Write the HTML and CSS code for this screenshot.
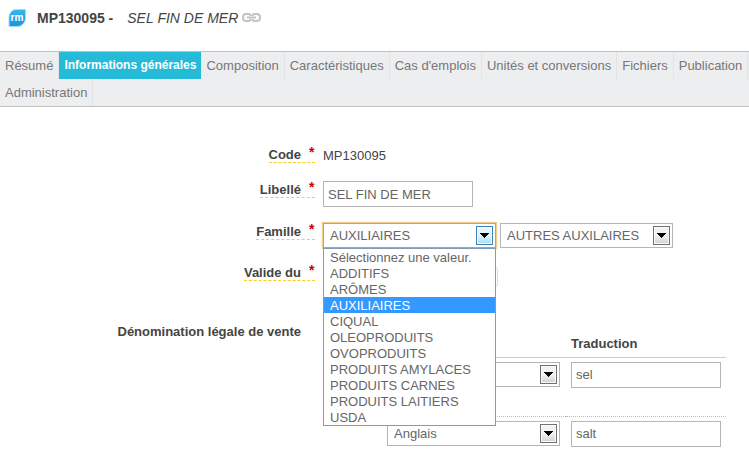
FILE: index.html
```html
<!DOCTYPE html>
<html lang="fr">
<head>
<meta charset="utf-8">
<title>MP130095 - SEL FIN DE MER</title>
<link rel="stylesheet" href="styles.css">
</head>
<body>
<header class="title-bar">
  <svg class="logo" viewBox="0 0 18 18" aria-hidden="true">
    <defs><linearGradient id="leaf" x1="0" y1="0" x2="0" y2="1"><stop offset="0" stop-color="#35b8ec"/><stop offset="1" stop-color="#1795d8"/></linearGradient></defs>
    <path d="M7 .5H17.500V10Q17 13 15 15Q12.500 17.500 10 17.500H1V8Q1 5 3 3Q5 .5 7 .5Z" fill="url(#leaf)" stroke="#a5dcf3"/>
    <text class="logo-text" x="9" y="12" text-anchor="middle">rm</text>
  </svg>
  <h1 class="title">MP130095 -</h1>
  <span class="subtitle">SEL FIN DE MER</span>
  <svg class="link-icon" viewBox="0 0 19 9" fill="none" stroke="#c3c3c3" stroke-width="2" aria-hidden="true">
    <path d="M8.500 3Q8.500 1 6.500 1H4Q1 1 1 4.500T4 8H6.500Q8.500 8 8.500 6M10.500 3Q10.500 1 12.500 1H15Q18 1 18 4.500T15 8H12.500Q10.500 8 10.500 6"/>
    <path d="M5 4.500H14"/>
  </svg>
</header>
<nav class="tabs">
  <a class="tab" href="#resume">Résumé</a>
  <a class="tab tab-active" href="#infos" aria-current="page">Informations générales</a>
  <a class="tab" href="#composition">Composition</a>
  <a class="tab" href="#caracteristiques">Caractéristiques</a>
  <a class="tab" href="#emplois">Cas d'emplois</a>
  <a class="tab" href="#unites">Unités et conversions</a>
  <a class="tab" href="#fichiers">Fichiers</a>
  <a class="tab" href="#publication">Publication</a>
  <a class="tab" href="#administration">Administration</a>
</nav>
<form class="form">
  <div class="row row-code">
    <div class="label-cell"><label class="label" for="code">Code<sup class="star">*</sup></label></div>
    <output class="value" id="code">MP130095</output>
  </div>
  <div class="row">
    <div class="label-cell"><label class="label" for="libelle">Libellé<sup class="star">*</sup></label></div>
    <div><input class="text-box" id="libelle" type="text" value="SEL FIN DE MER"></div>
  </div>
  <div class="row">
    <div class="label-cell"><label class="label" for="famille">Famille<sup class="star">*</sup></label></div>
    <div class="selects">
      <div class="select select-open">
        <select id="famille"><option>AUXILIAIRES</option></select>
        <svg class="arrow" viewBox="0 0 15 17" aria-hidden="true"><path d="M3 6H12V7H11V8H10V9H9V10H8V11H7V10H6V9H5V8H4V7H3Z"/></svg>
        <ul class="menu" role="listbox" aria-label="Famille">
          <li class="option" role="option">Sélectionnez une valeur.</li>
          <li class="option" role="option">ADDITIFS</li>
          <li class="option" role="option">ARÔMES</li>
          <li class="option option-selected" role="option" aria-selected="true">AUXILIAIRES</li>
          <li class="option" role="option">CIQUAL</li>
          <li class="option" role="option">OLEOPRODUITS</li>
          <li class="option" role="option">OVOPRODUITS</li>
          <li class="option" role="option">PRODUITS AMYLACES</li>
          <li class="option" role="option">PRODUITS CARNES</li>
          <li class="option" role="option">PRODUITS LAITIERS</li>
          <li class="option" role="option">USDA</li>
        </ul>
      </div>
      <div class="select">
        <select aria-label="Sous-famille"><option>AUTRES AUXILAIRES</option></select>
        <svg class="arrow" viewBox="0 0 15 17" aria-hidden="true"><path d="M3 6H12V7H11V8H10V9H9V10H8V11H7V10H6V9H5V8H4V7H3Z"/></svg>
      </div>
    </div>
  </div>
  <div class="row row-date">
    <div class="label-cell"><label class="label" for="valide">Valide du<sup class="star">*</sup></label></div>
    <div><input class="date-box" id="valide" type="text"></div>
  </div>
  <div class="row row-legal">
    <div class="label-cell"><span class="label-plain" id="denomination">Dénomination légale de vente</span></div>
    <table class="translations" aria-labelledby="denomination">
      <thead><tr><th class="lang-col" aria-label="Langue"></th><th>Traduction</th></tr></thead>
      <tbody>
        <tr class="first">
          <td><div class="select"><select aria-label="Langue 1"><option></option></select>
            <svg class="arrow" viewBox="0 0 15 17" aria-hidden="true"><path d="M3 6H12V7H11V8H10V9H9V10H8V11H7V10H6V9H5V8H4V7H3Z"/></svg></div></td>
          <td><input class="text-box" type="text" aria-label="Traduction 1" value="sel"></td>
        </tr>
        <tr>
          <td><div class="select"><select aria-label="Langue 2"><option>Anglais</option></select>
            <svg class="arrow" viewBox="0 0 15 17" aria-hidden="true"><path d="M3 6H12V7H11V8H10V9H9V10H8V11H7V10H6V9H5V8H4V7H3Z"/></svg></div></td>
          <td><input class="text-box" type="text" aria-label="Traduction 2" value="salt"></td>
        </tr>
      </tbody>
    </table>
  </div>
</form>
</body>
</html>
```
FILE: styles.css
```css
* { box-sizing: border-box; }

body {
  margin: 0;
  background: #fff;
  color: #444;
  font: 13px/16px "Liberation Sans", Arial, sans-serif;
}

.title-bar {
  display: flex;
  align-items: center;
  height: 51px;
  padding: 0 8px 16px;
  font-size: 14px;
}
.logo { width: 18px; height: 18px; }
.logo-text { fill: #fff; font-size: 10px; font-weight: bold; }
.title { margin: 0 14px 0 11px; font-size: 14px; }
.subtitle { font-style: italic; }
.link-icon { width: 19px; height: 9px; margin-left: 4px; }

.tabs {
  display: flex;
  flex-wrap: wrap;
  background: #edeef0;
  border-top: 1px solid #c0c0c0;
  border-bottom: 1px solid #c0c0c0;
}
.tab {
  padding: 0 5px;
  border-right: 1px solid #e2e3e5;
  color: #777;
  line-height: 27px;
  text-decoration: none;
}
.tab-active {
  border: 0;
  background: #25bbd8;
  color: #fff;
  font-size: 12px;
  font-weight: bold;
}

.form { padding-top: 41px; }
.row {
  display: grid;
  grid-template-columns: 315px 1fr;
  column-gap: 8px;
  margin-bottom: 16px;
}
.label-cell {
  display: flex;
  justify-content: flex-end;
  align-items: flex-start;
  padding-top: 2px;
}
.row-code { margin-bottom: 17px; }
.row-code .label-cell { padding-top: 0; }
.label {
  display: flex;
  gap: 8px;
  border-bottom: 1px dashed #fc2;
  font-weight: bold;
  line-height: 14px;
}
.star {
  width: 6px;
  color: #c00;
  font-size: 14px;
  line-height: 9px;
  vertical-align: top;
}
.label-plain { margin-right: 14px; font-weight: bold; }

.text-box, .select select {
  display: block;
  width: 150px;
  height: 26px;
  margin: 0;
  padding: 0 4px;
  border: 1px solid #b5b5b5;
  border-radius: 0;
  background: #fff;
  color: #666;
  font: 13px/16px "Liberation Sans", Arial, sans-serif;
}
.selects { display: flex; gap: 4px; }
.select { position: relative; width: 173px; }
.select select {
  appearance: none;
  width: 100%;
  height: 25px;
  padding: 1px 6px 0;
}
.select-open select { border-color: #d6a044; box-shadow: 0 0 1px 1px #f5cd88; }
.arrow {
  position: absolute;
  top: 3px;
  right: 3px;
  width: 17px;
  height: 19px;
  border: 1px solid #707070;
  background: linear-gradient(#f2f2f2 50%, #d0d0d0);
  box-shadow: inset 0 0 0 1px #fafafa;
  pointer-events: none;
}
.select-open .arrow {
  border-color: #3c7fb1;
  background: linear-gradient(#e4f4fc 50%, #a8d9f5);
}
.menu {
  position: absolute;
  z-index: 1;
  top: 100%;
  left: 0;
  right: 0;
  margin: 0;
  padding: 0;
  border: 1px solid #7f9db9;
  background: #fff;
  color: #666;
  list-style: none;
}
.option { padding: 1px 6px 0; line-height: 15px; white-space: nowrap; }
.option-selected { background: #39f; color: #fff; }

.row-date { margin-bottom: 35px; }
.date-box {
  display: block;
  width: 175px;
  height: 20px;
  margin-top: 3px;
  border: 1px solid #ddd;
  border-radius: 3px;
}

.translations {
  width: 344px;
  margin: 8px 0 0 59px;
  border-collapse: collapse;
}
.translations th {
  height: 27px;
  padding: 2px 5px 0;
  border-bottom: 1px solid #ccc;
  text-align: left;
}
.lang-col { width: 184px; }
.translations td { padding: 4px 5px; vertical-align: top; }
.first td { height: 59px; border-bottom: 1px dotted #bbb; }
```
